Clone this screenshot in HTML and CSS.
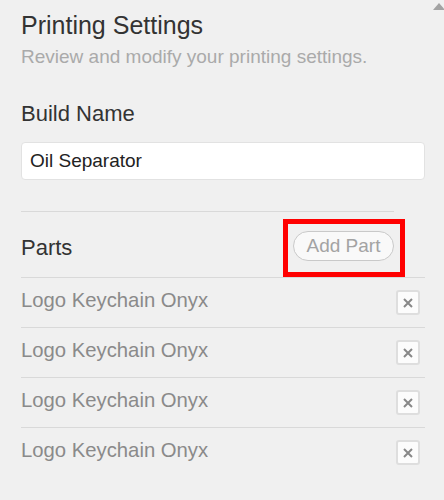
FILE: index.html
```html
<!DOCTYPE html>
<html>
<head>
<meta charset="utf-8">
<link rel="stylesheet" href="styles.css">
</head>
<body>
<div class="scroll-arrow"></div>
<div class="panel">
  <h1 class="title">Printing Settings</h1>
  <p class="subtitle">Review and modify your printing settings.</p>
  <label class="label build-label">Build Name</label>
  <div class="input">Oil Separator</div>
  <div class="parts-head">
    <span class="label">Parts</span>
    <span class="btn-wrap">
      <button class="add-btn">Add Part</button>
      <span class="highlight"></span>
    </span>
  </div>
  <ul class="parts">
    <li class="part"><span class="part-name">Logo Keychain Onyx</span><span class="remove"><svg width="10" height="10" viewBox="0 0 10 10"><path d="M1 1 L9 9 M9 1 L1 9" stroke="#888" stroke-width="2" fill="none"/></svg></span></li>
    <li class="part"><span class="part-name">Logo Keychain Onyx</span><span class="remove"><svg width="10" height="10" viewBox="0 0 10 10"><path d="M1 1 L9 9 M9 1 L1 9" stroke="#888" stroke-width="2" fill="none"/></svg></span></li>
    <li class="part"><span class="part-name">Logo Keychain Onyx</span><span class="remove"><svg width="10" height="10" viewBox="0 0 10 10"><path d="M1 1 L9 9 M9 1 L1 9" stroke="#888" stroke-width="2" fill="none"/></svg></span></li>
    <li class="part"><span class="part-name">Logo Keychain Onyx</span><span class="remove"><svg width="10" height="10" viewBox="0 0 10 10"><path d="M1 1 L9 9 M9 1 L1 9" stroke="#888" stroke-width="2" fill="none"/></svg></span></li>
  </ul>
</div>
</body>
</html>
```

FILE: styles.css
```css
html, body {
  margin: 0;
  padding: 0;
  background: #f0f0f0;
  font-family: "Liberation Sans", Arial, sans-serif;
}

body {
  padding: 0 19px 0 21px;
  position: relative;
  height: 500px;
  box-sizing: border-box;
  overflow: hidden;
}

.scroll-arrow {
  position: absolute;
  top: 3px;
  right: -1px;
  width: 0;
  height: 0;
  border-left: 6px solid transparent;
  border-right: 6px solid transparent;
  border-bottom: 7px solid #a3a3a3;
}

.panel {
  display: flex;
  flex-direction: column;
  padding-top: 10px;
}

.title {
  margin: 0;
  font-size: 25px;
  line-height: 30px;
  font-weight: normal;
  color: #333;
}

.subtitle {
  margin: 6px 0 0;
  font-size: 19px;
  line-height: 22px;
  color: #aaaaaa;
}

.label {
  font-size: 22px;
  line-height: 26px;
  color: #333;
}

.build-label {
  margin-top: 33px;
}

.input {
  margin-top: 15px;
  height: 38px;
  box-sizing: border-box;
  background: #fff;
  border: 1px solid #e2e2e2;
  border-radius: 4px;
  padding: 7px 8px;
  font-size: 19px;
  line-height: 22px;
  color: #222;
}

.parts-head {
  margin-top: 31px;
  margin-right: 31px;
  border-top: 1px solid #d9d9d9;
  padding: 19px 0 16px;
  display: flex;
  justify-content: space-between;
  align-items: flex-end;
}

.btn-wrap {
  position: relative;
  display: block;
}

.add-btn {
  display: block;
  height: 30px;
  width: 101px;
  box-sizing: border-box;
  border: 1px solid #c9c9c9;
  border-radius: 15px;
  background: #f9f9f9;
  padding: 0;
  font-family: "Liberation Sans", Arial, sans-serif;
  font-size: 19px;
  line-height: 26px;
  color: #a3a3a3;
}

.highlight {
  position: absolute;
  left: -10px;
  top: -12px;
  width: 122px;
  height: 58px;
  box-sizing: border-box;
  border: 5px solid #ff0000;
}

.parts {
  list-style: none;
  margin: 0;
  padding: 0;
}

.part {
  display: flex;
  align-items: center;
  justify-content: space-between;
  height: 50px;
  box-sizing: border-box;
  border-top: 1px solid #d9d9d9;
}

.part-name {
  font-size: 20.3px;
  line-height: 24px;
  color: #8a8a8a;
  padding-bottom: 6px;
}

.remove {
  width: 24px;
  height: 25px;
  box-sizing: border-box;
  margin-right: 5px;
  border: 2px solid #dedede;
  border-radius: 3px;
  background: #fcfcfc;
  display: flex;
  align-items: center;
  justify-content: center;
}
```
